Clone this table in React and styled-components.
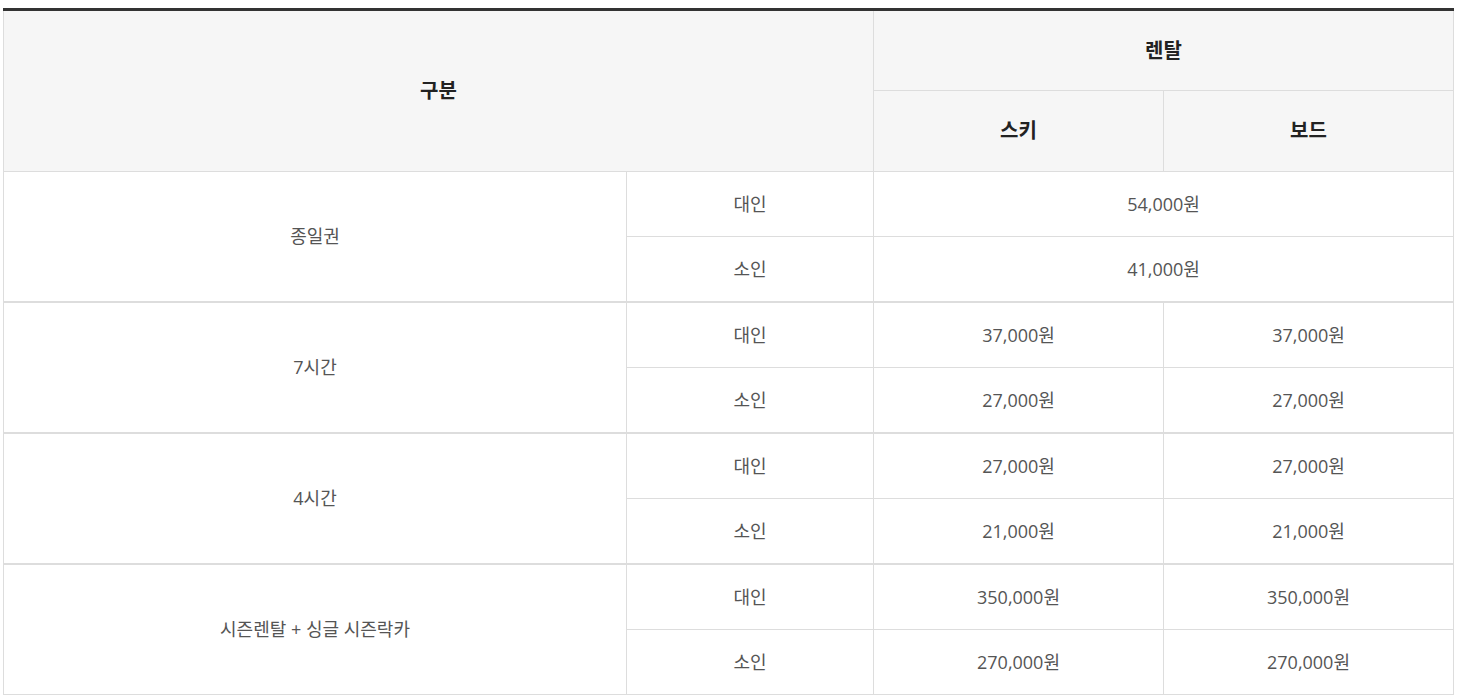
import React from 'react';
import styled, {createGlobalStyle} from 'styled-components';

const GlobalStyle = createGlobalStyle`
  html, body {
    margin: 0;
    padding: 0;
    background: #fff;
  }
  body {
    font-family: "Open Sans", "Noto Sans CJK KR", sans-serif;
  }
`;

const Wrap = styled.div`
  padding: 8px 4px 0 3px;
`;

const Table = styled.table`
  width: 1451px;
  border-collapse: collapse;
  table-layout: fixed;
  border-top: 3px solid #333;
  border-left: 1px solid #ddd;
  border-right: 1px solid #ddd;
  border-bottom: 1px solid #ddd;
`;

const Th = styled.th`
  box-sizing: border-box;
  height: 81px;
  padding: 0;
  background: #f6f6f6;
  border: 1px solid #ddd;
  color: #222;
  font-size: 20px;
  line-height: 1.3;
  font-weight: 700;
  text-align: center;
  vertical-align: middle;
`;

const Tr = styled.tr`
  height: ${props => (props.$groupStart ? 66 : 65)}px;
  border-top: ${props => (props.$groupStart ? '2px solid #ddd' : '1px solid #ddd')};
`;

const Td = styled.td`
  box-sizing: border-box;
  padding: 1px 0 0;
  border: 1px solid #ddd;
  color: #555;
  font-size: 18px;
  line-height: 1.3;
  text-align: center;
  vertical-align: middle;
`;

const rows = [
  {label: '종일권', adult: ['54,000원'], child: ['41,000원']},
  {label: '7시간', adult: ['37,000원', '37,000원'], child: ['27,000원', '27,000원']},
  {label: '4시간', adult: ['27,000원', '27,000원'], child: ['21,000원', '21,000원']},
  {label: '시즌렌탈 + 싱글 시즌락카', adult: ['350,000원', '350,000원'], child: ['270,000원', '270,000원']}
];

const Prices = ({values}) =>
  values.length === 1 ? (
    <Td colSpan={2}>{values[0]}</Td>
  ) : (
    values.map((v, i) => <Td key={i}>{v}</Td>)
  );

export default function App() {
  return (
    <Wrap>
      <GlobalStyle />
      <Table>
        <colgroup>
          <col style={{width: 623}} />
          <col style={{width: 247}} />
          <col style={{width: 290}} />
          <col style={{width: 290}} />
        </colgroup>
        <thead>
          <tr>
            <Th colSpan={2} rowSpan={2}>구분</Th>
            <Th colSpan={2}>렌탈</Th>
          </tr>
          <tr>
            <Th>스키</Th>
            <Th>보드</Th>
          </tr>
        </thead>
        <tbody>
          {rows.map((row, idx) => (
            <React.Fragment key={row.label}>
              <Tr $groupStart={idx > 0}>
                <Td rowSpan={2}>{row.label}</Td>
                <Td>대인</Td>
                <Prices values={row.adult} />
              </Tr>
              <Tr>
                <Td>소인</Td>
                <Prices values={row.child} />
              </Tr>
            </React.Fragment>
          ))}
        </tbody>
      </Table>
    </Wrap>
  );
}
